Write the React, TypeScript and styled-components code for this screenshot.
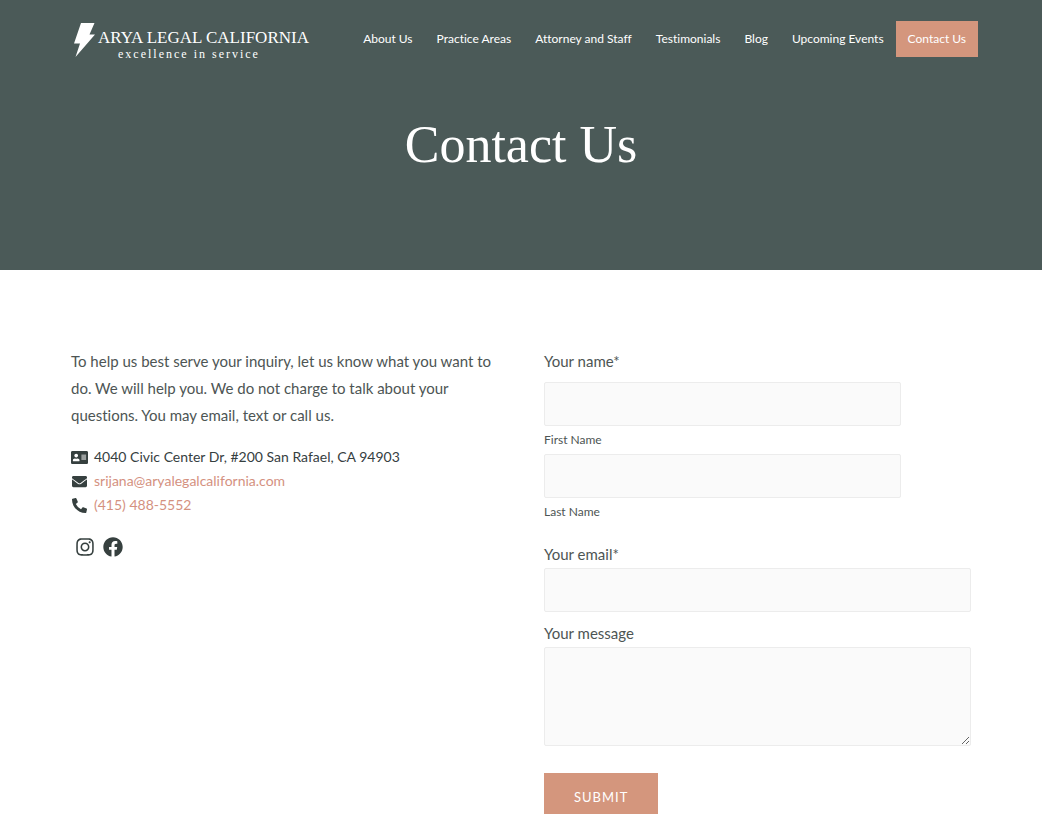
import React from "react";
import styled, { createGlobalStyle } from "styled-components";
import { FaAddressCard, FaEnvelope, FaFacebook, FaInstagram, FaPhoneAlt } from "react-icons/fa";

const sans = `Lato, "Liberation Sans", sans-serif`;
const serif = `"Liberation Serif", serif`;

const GlobalStyle = createGlobalStyle`
  *, *::before, *::after { box-sizing: border-box; }
  body {
    margin: 0;
    background: #fff;
    color: #4d5554;
    font: 400 15px/27px ${sans};
    font-variant-ligatures: none;
  }
  a { text-decoration: none; }
`;

const Hero = styled.header`
  background: #4b5a58;
  padding: 21px 64px 96px 74px;
`;

const TopBar = styled.div`
  display: flex;
  align-items: flex-start;
  justify-content: space-between;
`;

const Logo = styled.a`
  display: flex;
  gap: 3px;
  padding-top: 2px;
  color: #fff;
  font-family: ${serif};
`;

const Bolt = styled.svg`
  width: 21px;
  height: 34px;
  fill: #fff;
`;

const LogoText = styled.span`
  display: flex;
  flex-direction: column;
  align-items: flex-start;
  padding-top: 6px;
`;

const LogoName = styled.span`
  font-size: 17px;
  line-height: 18px;
  white-space: nowrap;
`;

const LogoTagline = styled.span`
  padding-left: 20px;
  font-size: 12px;
  line-height: 14px;
  letter-spacing: 2px;
  white-space: nowrap;
`;

const Nav = styled.nav`
  display: flex;
`;

const NavLink = styled.a<{ $active?: boolean }>`
  padding: 0 12px;
  background: ${(p) => (p.$active ? "#d4967d" : "transparent")};
  color: #fff;
  font-size: 12px;
  line-height: 36px;
  white-space: nowrap;
`;

const Title = styled.h1`
  margin: 55px 10px 0 0;
  color: #fff;
  font: 400 52px/58px ${serif};
  text-align: center;
`;

const Main = styled.main`
  display: grid;
  grid-template-columns: 1fr 1fr;
  gap: 46px;
  padding: 78px 71px 80px;
`;

const Intro = styled.p`
  margin: 0 0 16px;
`;

const ContactList = styled.address`
  display: flex;
  flex-direction: column;
  font-size: 14px;
  font-style: normal;
  line-height: 24px;
`;

const ContactItem = styled.div`
  display: flex;
  align-items: center;
  gap: 6px;
  color: #36403f;

  svg { width: 17px; }
  a { color: #d4917f; }
`;

const Social = styled.div`
  display: flex;
  gap: 8px;
  padding: 20px 4px;

  a {
    display: flex;
    color: #36403f;
  }
`;

const Form = styled.form`
  display: flex;
  flex-direction: column;
`;

const NameGroup = styled.fieldset`
  display: flex;
  flex-direction: column;
  width: calc(100% - 70px);
  margin: 0 0 14px;
  padding: 0;
  border: 0;
`;

const Legend = styled.legend`
  padding: 0 0 7px;
`;

const Label = styled.label`
  line-height: 28px;
`;

const SubLabel = styled.label`
  font-size: 12px;
  line-height: 28px;
`;

const Input = styled.input`
  width: 100%;
  height: 44px;
  padding: 0 12px;
  border: 1px solid #ececec;
  border-radius: 2px;
  background: #fafafa;
  font: inherit;
`;

const EmailInput = styled(Input)`
  margin-bottom: 7px;
`;

const Message = styled.textarea`
  display: block;
  width: 100%;
  height: 99px;
  padding: 12px;
  border: 1px solid #ececec;
  border-radius: 2px;
  background: #fafafa;
  font: inherit;
  resize: vertical;
`;

const Submit = styled.button`
  align-self: flex-start;
  margin-top: 27px;
  padding: 0 30px;
  border: 0;
  background: #d4967d;
  color: #fff;
  font: 400 13px/48px ${sans};
  letter-spacing: 1px;
`;

const links = [
  "About Us",
  "Practice Areas",
  "Attorney and Staff",
  "Testimonials",
  "Blog",
  "Upcoming Events",
  "Contact Us",
];

export default function App() {
  return (
    <>
      <GlobalStyle />
      <Hero>
        <TopBar>
          <Logo href="#">
            <Bolt viewBox="0 0 21 34" aria-hidden="true">
              <path d="M7 0H20.500L15.500 11.500H21L1.500 34L6 20.500H0Z" />
            </Bolt>
            <LogoText>
              <LogoName>ARYA LEGAL CALIFORNIA</LogoName>
              <LogoTagline>excellence in service</LogoTagline>
            </LogoText>
          </Logo>
          <Nav>
            {links.map((label) => (
              <NavLink key={label} href="#" $active={label === "Contact Us"}>
                {label}
              </NavLink>
            ))}
          </Nav>
        </TopBar>
        <Title>Contact Us</Title>
      </Hero>
      <Main>
        <section>
          <Intro>
            To help us best serve your inquiry, let us know what you want to do. We will help
            you. We do not charge to talk about your questions. You may email, text or call us.
          </Intro>
          <ContactList>
            <ContactItem>
              <FaAddressCard size={17} />
              <span>4040 Civic Center Dr, #200 San Rafael, CA 94903</span>
            </ContactItem>
            <ContactItem>
              <FaEnvelope size={15} />
              <a href="mailto:srijana@aryalegalcalifornia.com">srijana@aryalegalcalifornia.com</a>
            </ContactItem>
            <ContactItem>
              <FaPhoneAlt size={15} />
              <a href="tel:+14154885552">(415) 488-5552</a>
            </ContactItem>
          </ContactList>
          <Social>
            <a href="#" aria-label="Instagram">
              <FaInstagram size={20} />
            </a>
            <a href="#" aria-label="Facebook">
              <FaFacebook size={20} />
            </a>
          </Social>
        </section>
        <Form>
          <NameGroup>
            <Legend>Your name*</Legend>
            <Input id="first" type="text" />
            <SubLabel htmlFor="first">First Name</SubLabel>
            <Input id="last" type="text" />
            <SubLabel htmlFor="last">Last Name</SubLabel>
          </NameGroup>
          <Label htmlFor="email">Your email*</Label>
          <EmailInput id="email" type="email" />
          <Label htmlFor="message">Your message</Label>
          <Message id="message" />
          <Submit type="submit">SUBMIT</Submit>
        </Form>
      </Main>
    </>
  );
}
